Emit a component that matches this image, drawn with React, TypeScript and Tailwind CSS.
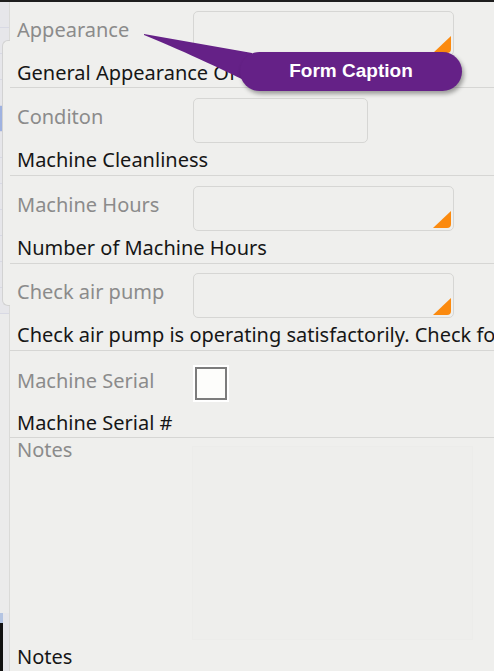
import React from "react";

const font = { fontFamily: '"Noto Sans", "Open Sans", sans-serif' };

function Tri() {
  return (
    <svg className="absolute right-[2px] bottom-[2px]" width="18" height="17" viewBox="0 0 18 17">
      <path d="M18 0 L18 13 Q18 17 14 17 L0 17 Z" fill="#fb8a0f" />
    </svg>
  );
}

function Box({ w, tri }: { w: string; tri?: boolean }) {
  return (
    <div className={`relative h-[45px] ${w} rounded-[5px] border border-[#d6d6d4] bg-[#efefed]`}>
      {tri && <Tri />}
    </div>
  );
}

function Row({
  h,
  label,
  desc,
  children,
  pt = "pt-[9px]",
  lt = "pt-[7px]",
  dt = "mt-[5px]",
  dw = "",
}: {
  h: string;
  label: string;
  desc: string;
  children: React.ReactNode;
  pt?: string;
  lt?: string;
  dt?: string;
  dw?: string;
}) {
  return (
    <div className={`${h} ${pt} border-b border-[#d6d6d4] pl-[7px] overflow-hidden`}>
      <div className="flex">
        <div className={`w-[176px] shrink-0 ${lt} text-[20px] leading-[24px] text-[#8b8b8b]`}>{label}</div>
        {children}
      </div>
      <div className={`${dt} ${dw} text-[20px] leading-[24px] text-[#161616] whitespace-nowrap`}>{desc}</div>
    </div>
  );
}

export default function App() {
  return (
    <div className="relative w-[494px] h-[671px] overflow-hidden bg-[#efefed]" style={font}>
      <div className="h-[2px] bg-[#1e1e1e]" />
      <div className="flex h-[669px]">
        {/* left background strip */}
        <div className="relative w-[9px] shrink-0 bg-[#e6e6ea] flex flex-col">
          <div className="h-[26px] border-b border-[#d8d9e4]" />
          <div className="h-[26px] border-b border-[#d8d9e4]" />
          <div className="h-[26px] border-b border-[#d8d9e4]" />
          <div className="h-[26px] border-b border-[#d8d9e4]" />
          <div className="h-[26px] border-b border-[#d8d9e4] bg-[#9fb2e0]" />
          <div className="h-[26px] border-b border-[#d8d9e4]" />
          <div className="h-[26px] border-b border-[#d8d9e4]" />
          <div className="h-[26px] border-b border-[#d8d9e4]" />
          <div className="h-[26px] border-b border-[#d8d9e4]" />
          <div className="h-[26px] border-b border-[#d8d9e4]" />
          <div className="h-[26px] border-b border-[#d8d9e4]" />
          <div className="h-[26px] border-b border-[#d8d9e4]" />
          <div className="flex-1 bg-[#ebebeb]" />
          <div className="h-[10px] w-[3px] bg-[#b4c4e2]" />
          <div className="h-[48px] w-[3px] bg-[#111]" />
          <div className="absolute left-[2px] top-[38px] h-[266px] w-[8px] rounded-l-[6px] border border-r-0 border-[#d2d2d2] bg-[#efefed]" />
        </div>
        <div className="flex-1 border-l border-[#dadad8] flex flex-col">
          <Row h="h-[86px]" label="Appearance" desc="General Appearance Of Machine" pt="pt-[9px]" dw="w-[222px] overflow-hidden">
            <Box w="w-[261px]" tri />
          </Row>
          <Row h="h-[88px]" label="Conditon" desc="Machine Cleanliness" pt="pt-[10px]">
            <Box w="w-[175px]" />
          </Row>
          <Row h="h-[88px]" label="Machine Hours" desc="Number of Machine Hours" pt="pt-[10px]">
            <Box w="w-[261px]" tri />
          </Row>
          <Row h="h-[87px]" label="Check air pump" desc="Check air pump is operating satisfactorily. Check fo" pt="pt-[9px]">
            <Box w="w-[261px]" tri />
          </Row>
          <Row h="h-[87px]" label="Machine Serial" desc="Machine Serial #" pt="pt-[14px]" lt="pt-[4px]" dt="mt-[9px]">
            <div className="h-[37px] w-[36px] bg-white p-[2px]">
              <div className="h-full w-full border-2 border-[#7c7c7c] bg-[#fdfdfb]" />
            </div>
          </Row>
          <div className="flex-1 pl-[7px] flex flex-col">
            <div className="flex">
              <div className="w-[175px] shrink-0 text-[20px] leading-[24px] text-[#8b8b8b]">Notes</div>
              <div className="mt-[8px] h-[194px] w-[281px] border border-[#ececea] bg-[#eeeeec]" />
            </div>
            <div className="mt-[5px] text-[20px] leading-[24px] text-[#161616]">Notes</div>
          </div>
        </div>
      </div>

      {/* tooltip */}
      <svg className="absolute left-0 top-0 pointer-events-none" width="494" height="120" viewBox="0 0 494 120">
        <path d="M144 34 L252 53 L252 84 C228 72 190 54 144 35 Z" fill="#652187" />
      </svg>
      <div
        className="absolute left-[240px] top-[52px] h-[39px] w-[222px] rounded-full bg-[#652187] flex items-center justify-center text-white font-bold text-[19px] shadow-[2px_3px_4px_rgba(0,0,0,0.35)]"
        style={{ fontFamily: '"Liberation Sans", Arial, sans-serif' }}
      >
        Form Caption
      </div>
    </div>
  );
}
